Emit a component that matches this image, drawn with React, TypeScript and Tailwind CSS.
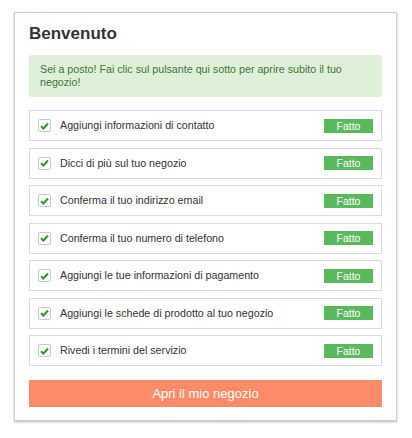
const steps = [
  "Aggiungi informazioni di contatto",
  "Dicci di più sul tuo negozio",
  "Conferma il tuo indirizzo email",
  "Conferma il tuo numero di telefono",
  "Aggiungi le tue informazioni di pagamento",
  "Aggiungi le schede di prodotto al tuo negozio",
  "Rivedi i termini del servizio",
];

function Check() {
  return (
    <div className="w-[13px] h-[13px] border border-[#c8c8c8] rounded-[2px] bg-white flex items-center justify-center shrink-0">
      <svg width="9" height="8" viewBox="0 0 9 8">
        <path d="M1 4.2 L3.4 6.5 L8 1.5" fill="none" stroke="#2a9a2a" strokeWidth="2" />
      </svg>
    </div>
  );
}

export default function App() {
  return (
    <div className="w-[412px] h-[438px] bg-white pt-[12px] pl-[14px] font-['Liberation_Sans',Arial,sans-serif]">
      <div className="w-[383px] border border-[#cfcfcf] shadow-[0_1px_2px_rgba(0,0,0,0.3)] bg-white px-[14px] pt-[9px] pb-[13px]">
        <h1 className="text-[17px] leading-[24px] font-bold text-[#333]">Benvenuto</h1>
        <div className="mt-[9px] bg-[#dff0d8] rounded-[3px] pl-[11px] pr-[10px] py-[8px] text-[10.7px] leading-[13px] text-[#3c763d]">
          Sei a posto! Fai clic sul pulsante qui sotto per aprire subito il tuo negozio!
        </div>
        <div className="mt-[13px] flex flex-col gap-[6.5px]">
          {steps.map((s) => (
            <div key={s} className="h-[31px] border border-[#dcdcdc] flex items-center pl-[8px] pr-[8px]">
              <Check />
              <span className="ml-[9px] text-[10.7px] text-[#333] flex-1">{s}</span>
              <span className="w-[49px] h-[14px] bg-[#5cb85c] text-white text-[10.5px] leading-[14px] text-center">Fatto</span>
            </div>
          ))}
        </div>
        <button className="mt-[14px] w-full h-[27px] bg-[#fd8b68] text-white text-[13px] leading-[27px] text-center">
          Apri il mio negozio
        </button>
      </div>
    </div>
  );
}
